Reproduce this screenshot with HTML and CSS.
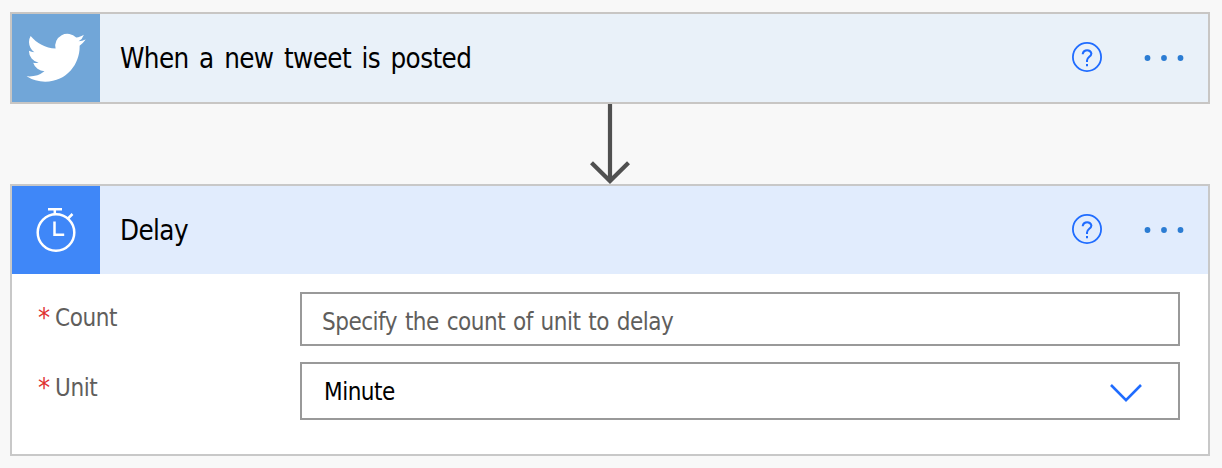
FILE: index.html
```
<!DOCTYPE html>
<html lang="en">
<head>
<meta charset="utf-8">
<title>Flow</title>
<link rel="stylesheet" href="styles.css">
</head>
<body>
<main class="flow">
  <section class="card card-tweet">
    <header class="card-header">
      <div class="tile">
        <svg width="88" height="88" viewBox="0 0 88 88"><path fill="#fff" transform="translate(14.6 14.2) scale(2.46)" d="M23.953 4.57a10 10 0 01-2.825.775 4.958 4.958 0 002.163-2.723c-.951.555-2.005.959-3.127 1.184a4.92 4.92 0 00-8.384 4.482C7.69 8.095 4.067 6.13 1.64 3.162a4.822 4.822 0 00-.666 2.475c0 1.71.87 3.213 2.188 4.096a4.904 4.904 0 01-2.228-.616v.06a4.923 4.923 0 003.946 4.827 4.996 4.996 0 01-2.212.085 4.936 4.936 0 004.604 3.417 9.867 9.867 0 01-6.102 2.105c-.39 0-.779-.023-1.17-.067a13.995 13.995 0 007.557 2.209c9.053 0 13.998-7.496 13.998-13.985 0-.21 0-.42-.015-.63A9.935 9.935 0 0024 4.59z"/></svg>
      </div>
      <h2 class="title">When a new tweet is posted</h2>
      <svg class="help" width="32" height="32" viewBox="0 0 32 32" fill="none" stroke="#1f6cff" stroke-width="1.8"><circle cx="16" cy="16" r="14.1"/><path stroke-width="2" d="M11.800 13.200v-.7a4.400 4.200 0 0 1 8.600 0c0 3.200-4.400 3.500-4.400 7.100v1.400M16 23v2.200"/></svg>
      <svg class="more" width="42" height="8" viewBox="0 0 42 8" fill="#2b7cd3"><circle cx="4.500" cy="4" r="2.900"/><circle cx="21" cy="4" r="2.900"/><circle cx="37.500" cy="4" r="2.900"/></svg>
    </header>
  </section>

  <svg class="connector" width="40" height="80" viewBox="0 0 40 80" fill="none" stroke="#505050" stroke-width="4.200"><path d="M20 0v77M1.500 58.700l18.500 18.300 18.500-18.300"/></svg>

  <section class="card card-delay">
    <header class="card-header">
      <div class="tile">
        <svg width="88" height="88" viewBox="0 0 88 88" fill="none" stroke="#fff" stroke-width="2.500"><circle cx="44" cy="46.500" r="18.300"/><path d="M36 23.300h14M42.800 23.500v5M55.500 33l5-5M42.500 35.500v13.200h9.700"/></svg>
      </div>
      <h2 class="title">Delay</h2>
      <svg class="help" width="32" height="32" viewBox="0 0 32 32" fill="none" stroke="#1f6cff" stroke-width="1.8"><circle cx="16" cy="16" r="14.1"/><path stroke-width="2" d="M11.800 13.200v-.7a4.400 4.200 0 0 1 8.600 0c0 3.200-4.400 3.500-4.400 7.100v1.400M16 23v2.200"/></svg>
      <svg class="more" width="42" height="8" viewBox="0 0 42 8" fill="#2b7cd3"><circle cx="4.500" cy="4" r="2.900"/><circle cx="21" cy="4" r="2.900"/><circle cx="37.500" cy="4" r="2.900"/></svg>
    </header>
    <div class="fields">
      <div class="field">
        <div class="label"><span class="required">*</span><span class="label-count">Count</span></div>
        <div class="control input"><span class="placeholder">Specify the count of unit to delay</span></div>
      </div>
      <div class="field">
        <div class="label"><span class="required">*</span><span class="label-unit">Unit</span></div>
        <div class="control select"><span class="value">Minute</span>
          <svg class="chevron" width="32" height="20" viewBox="0 0 32 20" fill="none" stroke="#1f6cff" stroke-width="2.600"><path d="M1 2l15 15.200L31 2"/></svg>
        </div>
      </div>
    </div>
  </section>
</main>
</body>
</html>
```
FILE: styles.css
```
* { box-sizing: border-box; }
body {
  margin: 0;
  background: #f8f8f8;
  font-family: "DejaVu Sans Condensed", Tahoma, sans-serif;
}
svg { display: block; flex: none; }
.flow {
  display: flex;
  flex-direction: column;
  width: 1222px;
  height: 468px;
  padding: 12px 12px 12px 10px;
}
.card { border: 2px solid #c8c8c8; background: #fff; }
.card-tweet { height: 92px; border-color: #c8c6c4; }
.card-delay { height: 272px; }
.card-header {
  display: flex;
  align-items: center;
  height: 88px;
  padding-right: 23px;
}
.card-tweet .card-header { background: #e9f1f9; }
.card-delay .card-header { background: #e1ecfd; }
.tile { width: 88px; height: 88px; margin-right: 20px; }
.card-tweet .tile { background: #71a6d8; }
.card-delay .tile { background: #3f87f8; }
.title {
  flex: 1;
  margin: 0;
  font-size: 27.500px;
  font-weight: 400;
  line-height: 40px;
  letter-spacing: -0.600px;
  word-spacing: 3.200px;
  color: #000;
}
.help { margin: -2px 40px 0 0; }
.connector { margin-left: 580px; }
.fields {
  display: flex;
  flex-direction: column;
  gap: 16px;
  padding: 18px 28px 0 26px;
}
.field { display: flex; }
.label {
  display: flex;
  width: 262px;
  padding-top: 9px;
  font-size: 24px;
  line-height: 34px;
  letter-spacing: -0.400px;
  color: #605e5c;
}
.required { width: 17px; font-size: 27px; color: #e03030; }
.control {
  flex: 1;
  display: flex;
  align-items: center;
  border: 2px solid #999;
  font-size: 24px;
  line-height: 34px;
  letter-spacing: -0.500px;
  word-spacing: 1.500px;
}
.input { height: 54px; padding: 5px 20px 0; color: #605e5c; }
.select { height: 58px; padding: 1px 36px 0 22px; color: #000; justify-content: space-between; }
.chevron { margin-top: 3px; }
```
